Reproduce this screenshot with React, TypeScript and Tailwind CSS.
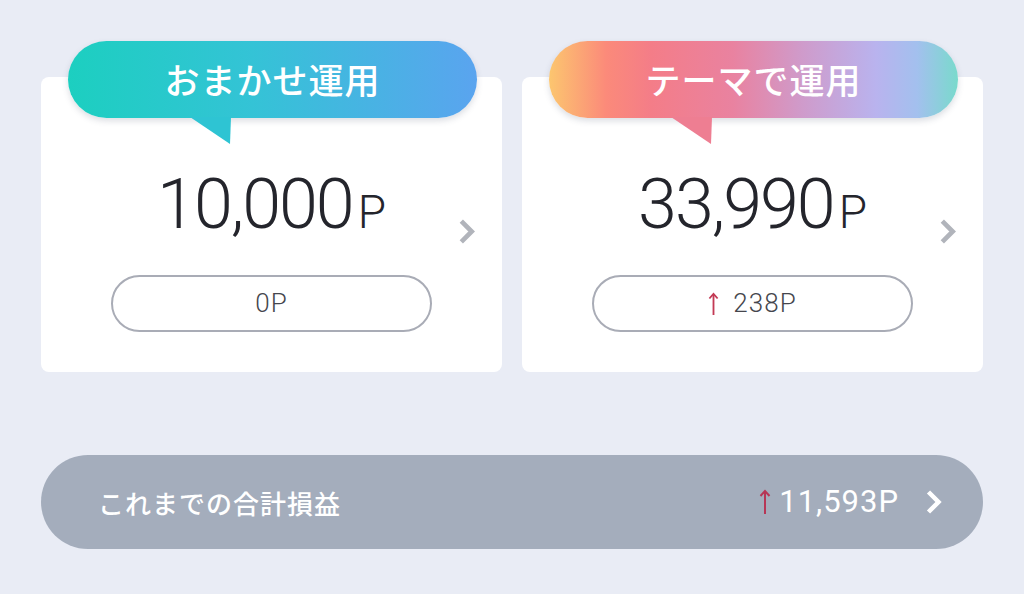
type Summary = {
  title: string;
  amount: string;
  change: string;
  up: boolean;
  gradient: string;
  tail: string;
};

const cards: Summary[] = [
  {
    title: "おまかせ運用",
    amount: "10,000",
    change: "0P",
    up: false,
    gradient: "bg-[linear-gradient(90deg,#1ccfc0_0%,#34c3d6_45%,#5aa4ef_100%)]",
    tail: "#2ec4d3",
  },
  {
    title: "テーマで運用",
    amount: "33,990",
    change: "238P",
    up: true,
    gradient:
      "bg-[linear-gradient(90deg,#fcc66f_0%,#fb8a7a_14%,#f47d88_25%,#e982a0_45%,#cf9bcb_62%,#b9b3ee_80%,#a3c0ee_90%,#79dacc_100%)]",
    tail: "#ee7e92",
  },
];

function UpArrow({ className }: { className?: string }) {
  return (
    <svg viewBox="0 0 12 26" className={className} fill="none" stroke="currentColor" strokeWidth={2}>
      <path d="M6 25V2" />
      <path d="M1.5 7L6 2l4.5 5" />
    </svg>
  );
}

function Chevron({ className, width = 4 }: { className?: string; width?: number }) {
  return (
    <svg viewBox="0 0 16 26" className={className} fill="none" stroke="currentColor" strokeWidth={width}>
      <path d="M3 3l10 10-10 10" />
    </svg>
  );
}

function Card({ item }: { item: Summary }) {
  return (
    <div className="relative flex h-[295px] flex-col items-center rounded-lg bg-white pt-[92px]">
      <div className="absolute left-[27px] top-[-36px] w-[409px]">
        <div
          className={`flex h-[77px] items-center justify-center rounded-full ${item.gradient} shadow-[0_3px_6px_rgba(60,70,100,0.18)]`}
        >
          <span className="text-[35px] font-medium tracking-[1px] text-white">{item.title}</span>
        </div>
        <svg className="absolute left-[122px] top-[76px]" width="41" height="27" viewBox="0 0 41 27">
          <polygon points="0,0 41,0 40,27" fill={item.tail} />
        </svg>
      </div>

      <div className="flex items-baseline font-['Roboto',sans-serif] font-light leading-[70px] text-[#24252c]">
        <span className="text-[70px] tracking-[-2px]">{item.amount}</span>
        <span className="ml-[5px] text-[46px]">P</span>
      </div>

      <Chevron className="absolute right-[27px] top-[141px] h-[27px] w-[17px] text-[#b1b4bb]" width={4.5} />

      <div className="mt-[28px] flex h-[57px] w-[321px] items-center justify-center gap-[14px] rounded-full border-2 border-[#a9acb6] font-['Roboto',sans-serif] text-[26px] font-light tracking-[1px] text-[#45464d]">
        {item.up && <UpArrow className="h-[24px] w-[11px] text-[#c33a55]" />}
        <span>{item.change}</span>
      </div>
    </div>
  );
}

export default function App() {
  return (
    <div className="min-h-[594px] bg-[#e9ecf5] px-[41px] pt-[77px] font-['Noto_Sans_CJK_JP',sans-serif]">
      <div className="grid grid-cols-2 gap-5">
        {cards.map((c) => (
          <Card key={c.title} item={c} />
        ))}
      </div>

      <div className="mt-[83px] flex h-[94px] items-center justify-between rounded-full bg-[#a4adbc] pl-[57px] pr-[41px]">
        <span className="text-[26px] font-medium tracking-[1px] text-white">これまでの合計損益</span>
        <div className="flex items-center">
          <UpArrow className="h-[26px] w-[12px] text-[#b73656]" />
          <span className="ml-[8px] font-['Roboto',sans-serif] text-[31px] tracking-[1px] text-white">
            11,593P
          </span>
          <Chevron className="ml-[26px] h-[26px] w-[17px] text-white" width={4.5} />
        </div>
      </div>
    </div>
  );
}
